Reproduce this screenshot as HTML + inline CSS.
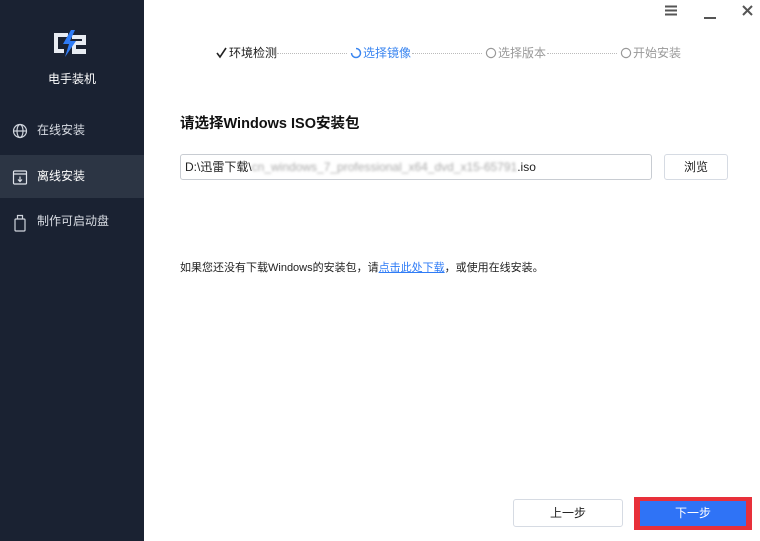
<!DOCTYPE html>
<html><head><meta charset="utf-8"><style>
*{margin:0;padding:0;box-sizing:border-box}
body{width:760px;height:541px;overflow:hidden;background:#fff;font-family:"Liberation Sans","Noto Sans CJK SC",sans-serif;position:relative;color:#222}
.sb{position:absolute;left:0;top:0;width:144px;height:541px;background:#1a2232}
.sb .t{position:absolute;top:70px;width:144px;text-align:center;color:#fff;font-size:12px}
.it{position:absolute;left:0;width:144px;height:43px;color:#d8dce3;font-size:12px;line-height:43px;padding-left:37px}
.it.a{background:#2c3544;color:#fff}
.ic{position:absolute;left:12px;top:14px}
.a1{position:absolute;font-size:12px;top:44px}
.si{position:absolute;top:47px}
.title{position:absolute;left:180px;top:112px;font-size:14.5px;font-weight:bold;color:#111}
.inp{position:absolute;left:180px;top:154px;width:472px;height:26px;border:1px solid #c8ccd2;border-radius:3px;font-size:12px;line-height:24px;padding-left:4px}
.btn{position:absolute;border:1px solid #d6dbe3;border-radius:3px;text-align:center;font-size:12px;background:#fff}
</style></head><body>
<div class="sb">
<svg style="position:absolute;left:52px;top:30px" width="38" height="28" viewBox="0 0 38 28"><path d="M2 3h14v4H6v12h6v4H2z" fill="#e8ecf2"/><path d="M20 5h14v10H24v4h10v5H20v-13h10v-2H20z" fill="#e8ecf2"/><path d="M19 0l-8 14h6l-4 13 11-16h-6l5-11z" fill="#2f7cf6"/></svg>
<div class="t">电手装机</div>
<div class="it" style="top:109px"><svg class="ic" width="16" height="16" viewBox="0 0 16 16" fill="none" stroke="#cfd4dc" stroke-width="1.2"><circle cx="8" cy="8" r="6.5"/><ellipse cx="8" cy="8" rx="3" ry="6.5"/><path d="M1.5 8h13"/></svg>在线安装</div>
<div class="it a" style="top:155px"><svg class="ic" width="16" height="16" viewBox="0 0 16 16" fill="none" stroke="#dfe3ea" stroke-width="1.2"><rect x="1.5" y="2" width="13" height="13" rx="1"/><path d="M1.5 5h13M8 7.5v5M6 10.5l2 2 2-2"/></svg>离线安装</div>
<div class="it" style="top:200px"><svg class="ic" width="16" height="18" viewBox="0 0 16 18" fill="none" stroke="#cfd4dc" stroke-width="1.2"><rect x="3" y="5" width="10" height="12" rx="1"/><path d="M5.5 5V1.5h5V5"/></svg>制作可启动盘</div>
</div>
<svg style="position:absolute;left:665px;top:5px" width="12" height="11"><path d="M0 1.5h12M0 5.5h12M0 9.5h12" stroke="#555" stroke-width="2"/></svg>
<div style="position:absolute;left:704px;top:17px;width:12px;height:2px;background:#555"></div>
<svg style="position:absolute;left:742px;top:5px" width="11" height="11"><path d="M1 1l9 9M10 1l-9 9" stroke="#555" stroke-width="2"/></svg>
<svg class="si" style="left:216px" width="12" height="12"><path d="M1 6l3 4 6-9" fill="none" stroke="#222" stroke-width="1.6"/></svg>
<div class="a1" style="left:229px">环境检测</div>
<svg class="si" style="left:350px" width="12" height="12"><path d="M6 1.5a4.5 4.5 0 1 1-4.5 4.5" fill="none" stroke="#3b86f0" stroke-width="1.5"/></svg>
<div class="a1" style="left:363px;color:#3b86f0">选择镜像</div>
<svg class="si" style="left:485px" width="12" height="12"><circle cx="6" cy="6" r="4.6" fill="none" stroke="#999" stroke-width="1.2"/></svg>
<div class="a1" style="left:498px;color:#999">选择版本</div>
<svg class="si" style="left:620px" width="12" height="12"><circle cx="6" cy="6" r="4.6" fill="none" stroke="#999" stroke-width="1.2"/></svg>
<div class="a1" style="left:633px;color:#999">开始安装</div>
<div style="position:absolute;left:277px;top:53px;width:70px;border-top:1px dotted #bbb"></div>
<div style="position:absolute;left:412px;top:53px;width:70px;border-top:1px dotted #bbb"></div>
<div style="position:absolute;left:547px;top:53px;width:70px;border-top:1px dotted #bbb"></div>
<div class="title">请选择Windows ISO安装包</div>
<div class="inp">D:\迅雷下载\<span style="color:#aaa;filter:blur(1.2px)">cn_windows_7_professional_x64_dvd_x15-65791</span>.iso</div>
<div class="btn" style="left:664px;top:154px;width:64px;height:26px;line-height:24px">浏览</div>
<div style="position:absolute;left:180px;top:259px;font-size:11px">如果您还没有下载Windows的安装包，请<span style="color:#2f7cf6;text-decoration:underline">点击此处下载</span>，或使用在线安装。</div>
<div class="btn" style="left:513px;top:499px;width:110px;height:28px;line-height:26px">上一步</div>
<div style="position:absolute;left:634px;top:497px;width:118px;height:33px;background:#e8303a;padding:4px 6px"><div style="background:#2f73f6;height:100%;color:#fff;font-size:12px;text-align:center;line-height:25px">下一步</div></div>
</body></html>
